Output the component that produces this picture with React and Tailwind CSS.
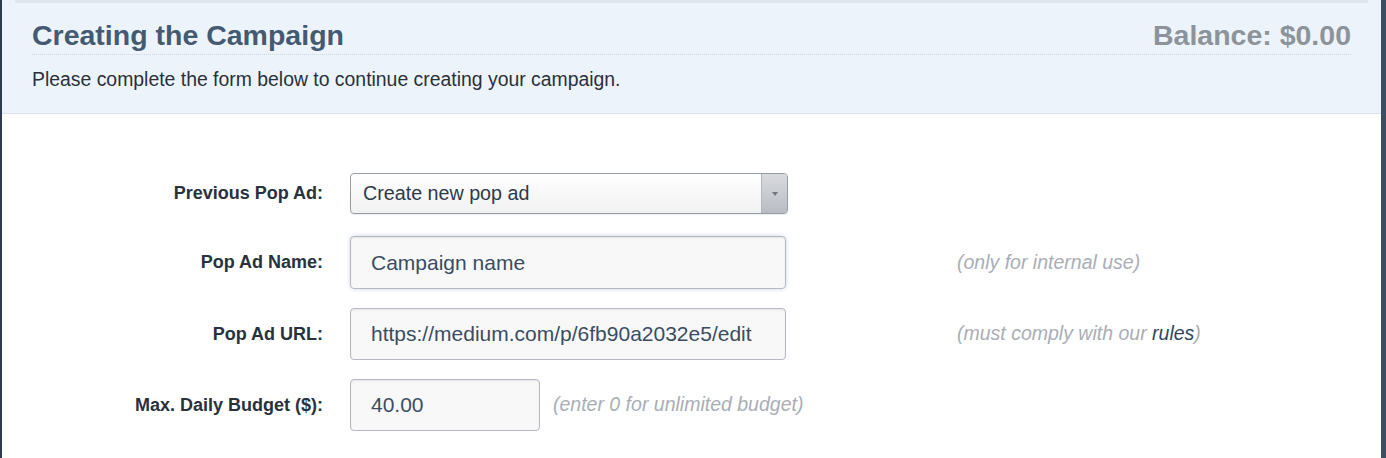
const rows = [
  { label: 'Pop Ad Name:', value: 'Campaign name', hint: 'name', h: 'h-[53px]' },
  { label: 'Pop Ad URL:', value: 'https://medium.com/p/6fb90a2032e5/edit', hint: 'url', h: 'h-[52px]' },
];

const fieldClass =
  'h-full w-full rounded-[4px] border border-[#b5bac2] bg-[#f8f8f8] px-5 text-[21px] text-[#3a4d63] shadow-[inset_0_1px_2px_rgba(0,0,0,0.08)] outline-none';

function Label({ children }) {
  return (
    <div className="w-[321px] shrink-0 text-right text-[18px] font-bold text-[#28323f]">{children}</div>
  );
}

export default function App() {
  return (
    <div className="relative h-[458px] w-[1386px] overflow-hidden bg-white font-['Liberation_Sans',Arial,sans-serif]">
      <div className="flex h-full">
        <div className="w-[2px] shrink-0 bg-[#2c3b4d]" />
        <div className="flex min-w-0 flex-1 flex-col">
          {/* header */}
          <div className="border-b border-[#dde3ec] bg-[#edf3fa]">
            <div className="mx-[13px] h-[3px] bg-[#dfe5ed]" />
            <div className="px-[30px] pt-[16px]">
              <div className="flex items-end justify-between border-b border-dotted border-[#cfd6df] pb-[3px]">
                <h1 className="text-[28.5px] font-bold leading-[32px] text-[#445a72]">Creating the Campaign</h1>
                <div className="text-[28.5px] font-bold leading-[32px] text-[#8c939b]">Balance: $0.00</div>
              </div>
              <p className="pb-[22px] pt-[12px] text-[19.4px] leading-[24px] text-[#28313c]">
                Please complete the form below to continue creating your campaign.
              </p>
            </div>
          </div>

          {/* form */}
          <div className="flex flex-col gap-[19px] pt-[59px]">
            <div className="mb-[3px] flex h-[41px] items-center gap-[27px]">
              <Label>Previous Pop Ad:</Label>
              <div className="flex h-full w-[438px] overflow-hidden rounded-[4px] border border-[#979da6] bg-gradient-to-b from-white to-[#f1f1f1] shadow-[0_1px_1px_rgba(0,0,0,0.08)]">
                <div className="flex flex-1 items-center px-3 text-[19.7px] text-[#2d3a49]">Create new pop ad</div>
                <div className="flex w-[26px] items-center justify-center border-l border-[#b3b8bf] bg-gradient-to-b from-[#d9dbdf] to-[#b9bdc3]">
                  <svg width="8" height="6" viewBox="0 0 8 6">
                    <path d="M1 1 L7 1 L4 5 Z" fill="#6f7680" />
                  </svg>
                </div>
              </div>
            </div>

            {rows.map((row) => (
              <div key={row.label} className={`flex ${row.h} items-center gap-[27px]`}>
                <Label>{row.label}</Label>
                <div
                  className={
                    row.hint === 'name'
                      ? 'h-full w-[436px] shrink-0 rounded-[5px] shadow-[0_0_4px_rgba(150,175,205,0.55)]'
                      : 'h-full w-[436px] shrink-0'
                  }
                >
                  <input className={fieldClass} defaultValue={row.value} readOnly />
                </div>
                <div className="pl-[144px] text-[19.5px] italic text-[#a9aeb6]">
                  {row.hint === 'name' ? (
                    '(only for internal use)'
                  ) : (
                    <>
                      (must comply with our <span className="text-[#2f4560]">rules</span>)
                    </>
                  )}
                </div>
              </div>
            ))}

            <div className="flex h-[52px] items-center gap-[27px]">
              <Label>Max. Daily Budget ($):</Label>
              <div className="h-full w-[190px] shrink-0">
                <input className={fieldClass} defaultValue="40.00" readOnly />
              </div>
              <div className="-ml-[14px] text-[19.5px] italic text-[#a9aeb6]">(enter 0 for unlimited budget)</div>
            </div>
          </div>
        </div>
        <div className="w-[5px] shrink-0 bg-[#3b4e64]" />
      </div>
    </div>
  );
}
